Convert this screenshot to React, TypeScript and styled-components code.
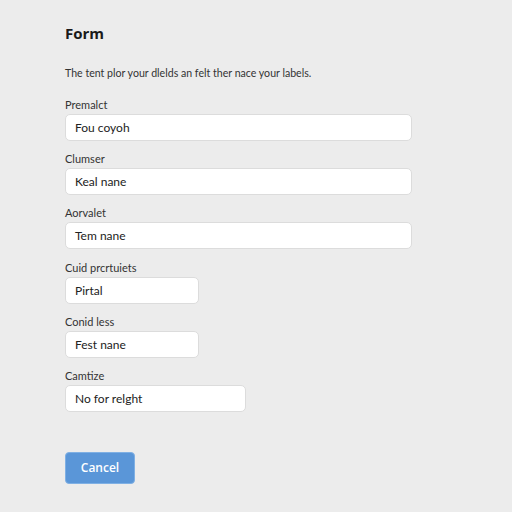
import React from "react";
import styled, { createGlobalStyle } from "styled-components";

const Global = createGlobalStyle`
  html, body { margin: 0; padding: 0; background: #ececec; }
  body { font-family: Lato, "Open Sans", "Liberation Sans", sans-serif; color: #222; }
`;

const Page = styled.div`
  width: 512px;
  height: 512px;
  box-sizing: border-box;
  padding: 22px 0 0 65px;
  display: flex;
  flex-direction: column;
`;

const Title = styled.h1`
  margin: 0;
  font-family: "Open Sans", "Liberation Sans", sans-serif;
  font-size: 15px;
  line-height: 22px;
  font-weight: 700;
  color: #1a1a1a;
`;

const Description = styled.p`
  margin: 21px 0 17px 0;
  font-size: 10.6px;
  line-height: 16px;
  color: #333;
`;

const Fields = styled.div`
  display: flex;
  flex-direction: column;
  gap: 11.2px;
`;

const Field = styled.div`
  display: flex;
  flex-direction: column;
  gap: 2px;
`;

const Label = styled.label`
  font-size: 11px;
  line-height: 14px;
  color: #333;
`;

const Input = styled.div<{ $w: number }>`
  width: ${(p) => p.$w}px;
  height: 27px;
  box-sizing: border-box;
  background: #fff;
  border: 1px solid #dcdcdc;
  border-radius: 5px;
  padding: 0 9px;
  display: flex;
  align-items: center;
  font-size: 12px;
  color: #222;
`;

const Button = styled.button`
  margin-top: 40px;
  width: 70px;
  height: 32px;
  align-self: flex-start;
  background: #5a96d8;
  border: 1px solid #7fb0e4;
  border-radius: 4px;
  color: #fff;
  font-family: "Open Sans", "Liberation Sans", sans-serif;
  font-size: 12px;
  font-weight: 600;
  padding: 0;
`;

const fields = [
  { label: "Premalct", value: "Fou coyoh", w: 347 },
  { label: "Clumser", value: "Keal nane", w: 347 },
  { label: "Aorvalet", value: "Tem nane", w: 347 },
  { label: "Cuid prcrtuiets", value: "Pirtal", w: 134 },
  { label: "Conid less", value: "Fest nane", w: 134 },
  { label: "Camtize", value: "No for relght", w: 181 },
];

export default function App() {
  return (
    <>
      <Global />
      <Page>
        <Title>Form</Title>
        <Description>The tent plor your dlelds an felt ther nace your labels.</Description>
        <Fields>
          {fields.map((f) => (
            <Field key={f.label}>
              <Label>{f.label}</Label>
              <Input $w={f.w}>{f.value}</Input>
            </Field>
          ))}
        </Fields>
        <Button>Cancel</Button>
      </Page>
    </>
  );
}
